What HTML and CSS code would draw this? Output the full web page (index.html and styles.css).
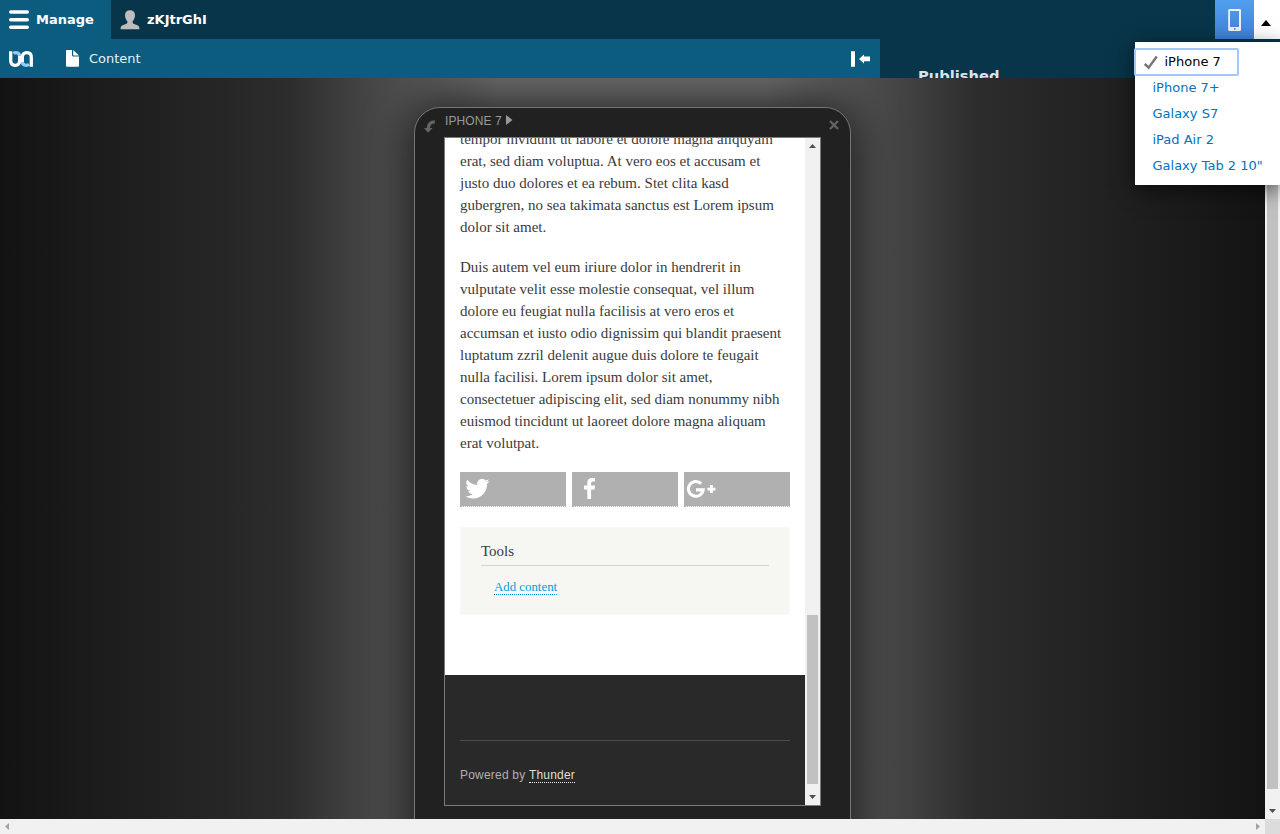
FILE: index.html
```html
<!DOCTYPE html>
<html lang="en">
<head>
<meta charset="utf-8">
<title>Responsive preview</title>
<link rel="stylesheet" href="styles.css">
</head>
<body>
<header class="toolbar">
  <div class="bar">
    <a class="manage"><svg width="20" height="20" viewBox="0 0 20 20" fill="none" stroke="#fff" stroke-width="3.6" stroke-linecap="round"><path d="M1.8 2h16.4M1.8 9.8h16.4M1.8 17.3h16.4"/></svg>Manage</a>
    <a class="user"><svg width="20" height="20" viewBox="0 0 20 20" fill="#bebebe"><path d="M10 .3c-3 0-5 1.700-5 4.700 0 2.700 1 4.700 2.300 6.300.3 1.200 0 2-.8 2.400L2 15.500C.8 16.200.6 17.500.6 19.300h18.800c0-1.800-.2-3.100-1.400-3.800l-4.500-1.800c-.8-.4-1.100-1.200-.8-2.400C14 9.700 15 7.700 15 5c0-3-2-4.700-5-4.700z"/></svg>zKJtrGhI</a>
    <span class="grow"></span>
    <button class="device-button"><svg width="14" height="22" viewBox="0 0 14 22"><path fill="#f0f0f0" fill-rule="evenodd" d="M1.500 0h10.200q1.300 0 1.300 1.300v19.400q0 1.300-1.300 1.300H1.500q-1.300 0-1.300-1.300V1.300Q.2 0 1.500 0zM2 2v16h9V2z"/><rect x="6" y="19" width="1.500" height="1.800" fill="#4a87dc"/></svg></button>
    <button class="device-toggle"><svg width="10" height="6"><path d="M0 6L5 0l5 6z"/></svg></button>
  </div>
  <div class="tray-row">
    <nav class="tray">
      <svg class="logo" width="25" height="16" viewBox="0 0 25 16" fill="none" stroke-width="3.300"><path stroke="#93cdf5" d="M4.500 2.500Q5.500 1.700 7 1.700q3.700 0 3.700 4M13.300 10q0 4.300 4 4.300 1.500 0 2.700-1"/><path stroke="#fff" d="M1.700 .3V9.500Q1.700 14.300 6.200 14.300T10.700 9.500V5M13.300 11V6.300Q13.300 1.700 17.800 1.700T22.300 6.300V15.700"/></svg>
      <a class="content-link"><svg width="13" height="17" viewBox="0 0 13 17" fill="#fff"><path d="M0 1Q0 0 1 0h5v5.200Q6 6.500 7.300 6.500H13v9q0 1.200-1 1.200H1q-1 0-1-1zM7.200 0L13 5.400H7.200z"/></svg>Content</a>
      <span class="grow"></span>
      <svg class="collapse" width="20" height="16" viewBox="0 0 20 16" fill="#fff"><path d="M0 .3h4V15.700H0zM8 8l5-4.500V5.600h6v4.700h-6v2.200z"/></svg>
    </nav>
    <strong class="published">Published</strong>
  </div>
  <ul class="menu">
    <li class="active"><svg width="15" height="15" viewBox="0 0 15 15" fill="none" stroke="#777" stroke-width="2.500"><path d="M.8 9L4.600 12.700 12.800 1.500"/></svg>iPhone 7</li>
    <li>iPhone 7+</li>
    <li>Galaxy S7</li>
    <li>iPad Air 2</li>
    <li>Galaxy Tab 2 10"</li>
  </ul>
</header>
<div class="page">
  <main class="stage">
    <section class="device">
      <div class="device-head">
        <svg class="rotate" width="12" height="13" viewBox="0 0 12 13"><path fill="#646464" d="M10.800.2V3.400C7.800 3.400 6.200 4.800 6 8H8.600L4 12.800 0 8H2.800C3 3 6 .2 10.800.2z"/></svg>
        <span class="device-name">IPHONE 7</span>
        <svg class="next" width="7" height="10"><path fill="#999" d="M0 0l6.500 5L0 10z"/></svg>
        <span class="grow"></span>
        <svg class="close" width="10" height="10" viewBox="0 0 10 10" stroke="#636363" stroke-width="2.300"><path d="M1 1l8 8M9 1l-8 8"/></svg>
      </div>
      <div class="screen">
        <div class="site">
          <article>
            <p>tempor invidunt ut labore et dolore magna aliquyam<br>erat, sed diam voluptua. At vero eos et accusam et<br>justo duo dolores et ea rebum. Stet clita kasd<br>gubergren, no sea takimata sanctus est Lorem ipsum<br>dolor sit amet.</p>
            <p>Duis autem vel eum iriure dolor in hendrerit in<br>vulputate velit esse molestie consequat, vel illum<br>dolore eu feugiat nulla facilisis at vero eros et<br>accumsan et iusto odio dignissim qui blandit praesent<br>luptatum zzril delenit augue duis dolore te feugait<br>nulla facilisi. Lorem ipsum dolor sit amet,<br>consectetuer adipiscing elit, sed diam nonummy nibh<br>euismod tincidunt ut laoreet dolore magna aliquam<br>erat volutpat.</p>
            <div class="share">
              <a><svg width="35" height="34" viewBox="0 0 35 34"><path fill="#fff" transform="translate(5.500 4.700)" d="M23.950 4.570a10 10 0 0 1-2.820.77 4.960 4.960 0 0 0 2.160-2.720 9.900 9.900 0 0 1-3.120 1.180 4.920 4.920 0 0 0-8.380 4.480A13.930 13.930 0 0 1 1.640 3.160a4.920 4.920 0 0 0 1.520 6.570 4.900 4.900 0 0 1-2.230-.61v.06a4.920 4.920 0 0 0 3.950 4.830 5 5 0 0 1-2.210.08 4.940 4.940 0 0 0 4.600 3.420A9.870 9.870 0 0 1 0 19.540a13.990 13.990 0 0 0 7.550 2.210c9.050 0 14-7.500 14-13.980l-.02-.64a9.940 9.940 0 0 0 2.420-2.560z"/></svg></a>
              <a><svg width="35" height="34" viewBox="0 0 35 34"><path fill="#fff" d="M15.300 27v-9.500H12v-3.900h3.300v-2.800c0-3.300 1.700-4.900 4.800-4.900 1.400 0 2.300.1 2.900.2v3.400h-2c-1.500 0-1.900.8-1.900 1.900v2.200H23l-.5 3.900h-3.400V27z"/></svg></a>
              <a><svg width="35" height="34" viewBox="0 0 35 34" fill="none" stroke="#fff"><path stroke-width="3.100" d="M17.200 11.700A7.400 7.400 0 1 0 19.200 17.900H12"/><path stroke-width="2.800" d="M23.400 17.100h8M27.400 13.100v8"/></svg></a>
            </div>
            <aside class="tools"><h2>Tools</h2><a>Add content</a></aside>
          </article>
          <footer><div>Powered by <a>Thunder</a></div></footer>
        </div>
        <div class="vbar screen-bar">
          <svg width="7" height="4"><path fill="#505050" d="M0 4L3.500 0 7 4z"/></svg>
          <i class="thumb"></i>
          <svg width="7" height="4"><path fill="#505050" d="M0 0L3.500 4 7 0z"/></svg>
        </div>
      </div>
    </section>
  </main>
  <div class="vbar page-bar"><i class="thumb"></i><svg width="7" height="4"><path fill="#505050" d="M0 0L3.500 4 7 0z"/></svg></div>
</div>
<div class="hbar"><svg width="4" height="7"><path fill="#a3a3a3" d="M4 0L0 3.500 4 7z"/></svg><span class="grow"></span><svg width="4" height="7"><path fill="#a3a3a3" d="M0 0l4 3.500L0 7z"/></svg><i class="corner"></i></div>
</body>
</html>
```
FILE: styles.css
```css
* { box-sizing: border-box; }
body { margin: 0; width: 1280px; height: 834px; overflow: hidden; display: flex; flex-direction: column; font-family: "DejaVu Sans", sans-serif; font-size: 13px; }
svg { display: block; flex: none; }
button { border: 0; padding: 0; margin: 0; }
ul, p, h2 { margin: 0; padding: 0; list-style: none; }
.grow { flex: 1; }
.toolbar { position: relative; z-index: 2; flex: none; height: 78px; background: #083549; color: #fff; }
.bar { display: flex; height: 39px; font-weight: bold; }
.manage { display: flex; align-items: center; width: 111px; padding-left: 9px; gap: 7px; background: #0c5c80; }
.user { display: flex; align-items: center; padding-left: 9px; gap: 7px; }
.device-button { display: flex; align-items: center; width: 39px; padding: 1px 0 0 13px; background: linear-gradient(#509fee, #427fd8); }
.device-toggle { display: flex; justify-content: center; width: 26px; padding: 20px 2px 0 0; background: #fff; }
.tray-row { display: flex; height: 39px; overflow: hidden; }
.tray { display: flex; align-items: center; width: 880px; padding: 0 9px; background: #0c5c80; }
.logo { margin-top: 1px; }
.content-link { display: flex; align-items: center; gap: 10px; margin-left: 32px; color: #e6f1f7; }
.collapse { margin-top: 1px; }
.published { padding: 28px 0 0 38px; font-size: 14.700px; line-height: 18px; color: #dce3e8; }
.menu { position: absolute; z-index: 3; top: 42px; right: 0; width: 145px; height: 143px; padding-top: 7px; background: #fff; color: #0074bd; box-shadow: 0 5px 20px rgba(0,0,0,.6); line-height: 26px; white-space: nowrap; }
.menu li { height: 26px; padding-left: 17.500px; }
.menu .active { display: flex; align-items: center; gap: 5.500px; width: 103px; padding-left: 9px; color: #000; border-radius: 1px; box-shadow: 0 0 0 1px #a6c5fb, inset 0 0 0 1px #a6c5fb; }
.page { display: flex; flex: none; height: 741px; }
.stage { display: flex; width: 1265px; overflow: hidden; padding: 29px 0 0 414px; background: linear-gradient(90deg, #131313 0, #1c1c1c 100px, #262626 220px, #2d2d2d 290px, #494949 380px, #6a6a6a 500px, #6a6a6a 765px, #494949 885px, #2d2d2d 975px, #262626 1045px, #1c1c1c 1165px, #131313); }
.device { display: flex; flex-direction: column; flex: none; width: 437px; height: 790px; padding: 0 29px; background: #212121; border: 1px solid #767676; border-radius: 26px; box-shadow: 0 0 45px 3px rgba(0,0,0,.7); }
.device-head { display: flex; flex: none; height: 29px; font: 12px "Liberation Sans", sans-serif; color: #999; margin: 0 -21px; }
.rotate { margin: 12px 0 0 1px; }
.device-name { width: 57px; margin: 6px 0 0 9px; letter-spacing: .1px; white-space: nowrap; }
.next { margin: 7px 0 0 4px; }
.close { margin: 12px 3.500px 0 0; }
.screen { display: flex; width: 377px; height: 669px; border: 1px solid #7b7b7b; overflow: hidden; background: #fff; }
.site { width: 360px; overflow: hidden; font: 15px/22px "Liberation Serif", serif; color: #3b3b3b; }
article { height: 547px; padding: 0 15px; margin-top: -10px; white-space: nowrap; }
p { margin-bottom: 18px; }
.share { display: flex; gap: 6px; }
.share a { width: 106px; height: 35px; background: #b0b0b0; border-bottom: 1px dotted #b0b0b0; background-clip: padding-box; }
.tools { height: 88px; margin-top: 20px; padding: 13px 20px 0; background: #f6f6f2; border: 1px solid #f9f9f9; }
.tools h2 { height: 25px; margin-bottom: 13px; border-bottom: 1px solid #d3d4d2; font-weight: normal; font-size: 15px; line-height: 21px; }
.tools a { display: block; width: 63px; height: 16px; margin-left: 13px; font-size: 12.850px; line-height: 16px; color: #009fe0; border-bottom: 1px dotted #0094dc; }
footer { height: 130px; padding: 65px 15px 0; background: #292929; font: 12px "Liberation Sans", sans-serif; color: #b0b0b0; }
footer div { padding-top: 27px; border-top: 1px solid #4c4c4c; letter-spacing: .2px; }
footer a { display: inline-block; line-height: 14px; color: #dedede; border-bottom: 1px dotted #ededed; }
.vbar { display: flex; flex-direction: column; align-items: center; width: 15px; background: #f1f1f1; }
.thumb { width: 11px; background: #c1c1c1; }
.screen-bar { padding-top: 6px; }
.screen-bar .thumb { height: 169px; margin: 467px 0 11px; }
.page-bar .thumb { height: 711px; margin-bottom: 20px; }
.hbar { display: flex; align-items: center; height: 15px; padding-left: 5px; background: #f1f1f1; }
.corner { width: 15px; height: 15px; margin-left: 5px; background: #dcdcdc; }
```
